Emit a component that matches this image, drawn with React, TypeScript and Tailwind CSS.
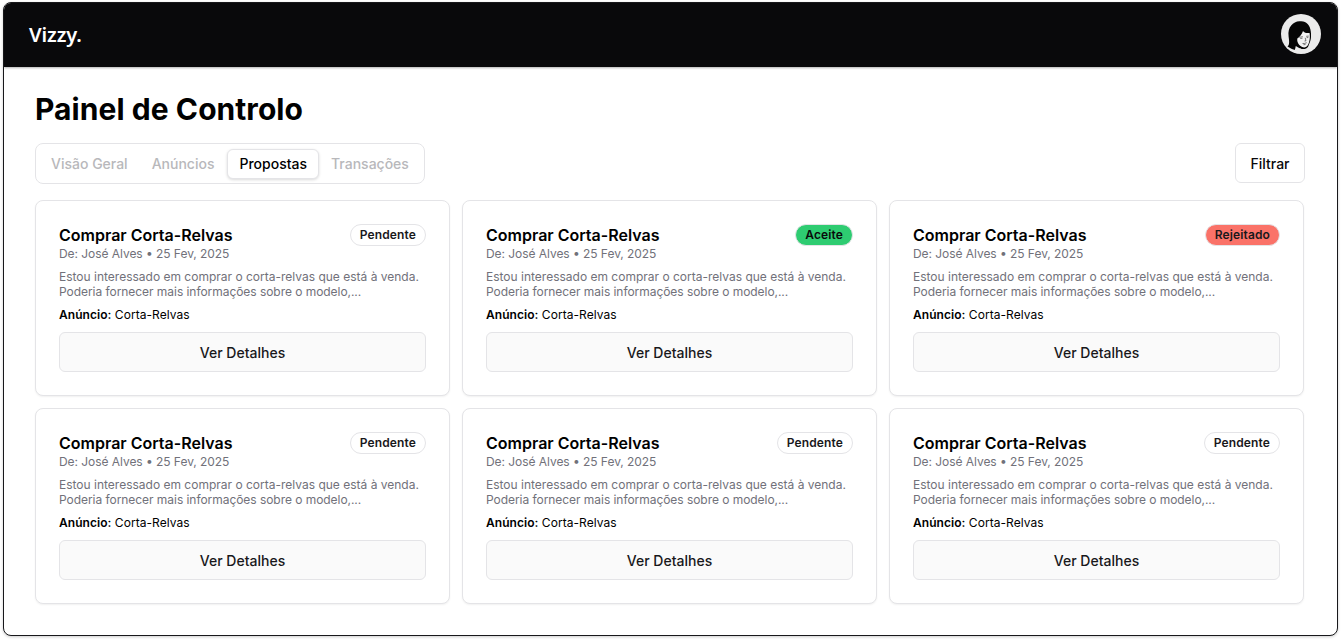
const tabs = ["Visão Geral", "Anúncios", "Propostas", "Transações"];

type Status = "Pendente" | "Aceite" | "Rejeitado";

const statuses: Status[] = ["Pendente", "Aceite", "Rejeitado", "Pendente", "Pendente", "Pendente"];

const badgeStyles: Record<Status, string> = {
  Pendente: "bg-white text-[#18181b]",
  Aceite: "bg-[#2ecc71] text-[#09090b]",
  Rejeitado: "bg-[#fa7268] text-[#18181b]",
};

function Avatar() {
  return (
    <svg viewBox="0 0 40 40" className="mb-0.5 size-10 shrink-0">
      <circle cx="20" cy="20" r="20" fill="#ebebeb" />
      <path
        d="M6.500 32.500C8.800 31 8.200 27 7.600 22.500C6.500 13 12 7.600 18.500 7.300C25 6.300 29.300 11 29.800 17.500C30.200 21 30.300 24 29.300 27L27.200 32.500C25.500 35.300 22 35.600 19.500 34.500L16 36.500C12 35.800 9.500 34.500 6.500 32.500Z"
        fill="#050505"
      />
      <path
        d="M16.300 24.500C18.500 23 20.800 20.500 22 17C23.500 19 26 19.300 28.600 19C29.200 23.500 28.800 29 26 32.300C24.300 34.200 20.800 33.500 18.300 31C16.700 29.300 15.900 27 16.300 24.500Z"
        fill="#f2f2f2"
      />
      <path
        d="M14.800 32L17.200 33.500L20 34.800L17.500 39L13.500 37.500Z"
        fill="#ebebeb"
      />
      <path
        d="M18.300 23.300L21.800 22.700M19.300 24.500L21.500 24.200M25.200 22.300L27.700 22.100M25.600 23.700L27.300 23.500M24.200 23.800L25 26.800L23.500 27M21.500 29.500Q23.500 29.800 25.700 28.700M22.500 30.700L24.500 30.500"
        stroke="#222"
        strokeWidth="0.600"
        fill="none"
      />
    </svg>
  );
}

function ProposalCard({ status }: { status: Status }) {
  return (
    <article className="flex h-[196px] flex-col rounded-lg border border-[#e4e4e7] bg-white p-[23px] shadow-[0_1px_2px_rgba(0,0,0,0.06)]">
      <div className="flex h-[22px] items-center justify-between">
        <h2 className="text-base font-semibold text-black">Comprar Corta-Relvas</h2>
        <span
          className={`flex h-[22px] items-center rounded-full border border-[#e4e4e7] px-[9px] text-xs font-semibold tracking-[0.01em] ${badgeStyles[status]}`}
        >
          {status}
        </span>
      </div>
      <p className="text-xs leading-[15px] tracking-[-0.004em] text-[#71717a] [font-feature-settings:'calt'_1]">
        De: José Alves • 25 Fev, 2025
      </p>
      <p className="mt-2 text-xs leading-[15px] text-[#71717a]">
        Estou interessado em comprar o corta-relvas que está à venda.
        <br />
        <span className="tracking-[-0.004em]">Poderia fornecer mais informações sobre o modelo,...</span>
      </p>
      <p className="mt-2 text-xs leading-[15px] tracking-[0.004em] text-black [font-feature-settings:'calt'_1]">
        <strong className="font-semibold">Anúncio:</strong> Corta-Relvas
      </p>
      <button className="mt-auto h-10 w-full rounded-md border border-[#e4e4e7] bg-[#fafafa] pt-px text-sm font-medium text-[#18181b]">
        Ver Detalhes
      </button>
    </article>
  );
}

export default function App() {
  return (
    <div className="h-[640px] bg-white pt-0.5 pr-[3px] pl-[3px] font-['Inter',sans-serif]">
      <div className="h-[634px] overflow-hidden rounded-lg border border-[#18181b] bg-white shadow-[0_1px_3px_rgba(0,0,0,0.2)]">
        <header className="flex h-16 items-center justify-between bg-[#09090b] pr-4 pl-[25px] shadow-[0_1px_2px_rgba(0,0,0,0.3)]">
          <span className="font-['Noto_Sans',sans-serif] text-xl font-semibold tracking-[-0.005em] text-white">Vizzy.</span>
          <Avatar />
        </header>
        <main className="pt-6 pr-8 pl-[31px]">
          <h1 className="text-[30px] leading-9 font-bold tracking-[0.002em] text-black">Painel de Controlo</h1>
          <div className="mt-4 flex items-start justify-between">
            <nav className="flex h-[41px] w-[390px] items-center rounded-lg border border-[#e4e4e7] pl-[3px]">
              {tabs.map((tab) => (
                <button
                  key={tab}
                  className={
                    tab === "Propostas"
                      ? "ml-px h-[30px] rounded-md border border-[#e4e4e7] bg-white px-[11px] text-sm font-medium text-black shadow-[0_1px_3px_rgba(0,0,0,0.15)]"
                      : "h-[30px] px-3 text-sm font-medium text-[#b8b8bb]"
                  }
                >
                  {tab}
                </button>
              ))}
            </nav>
            <button className="h-10 w-[70px] rounded-md border border-[#e4e4e7] bg-white pt-px text-sm font-medium text-[#09090b]">
              Filtrar
            </button>
          </div>
          <section className="mt-4 grid grid-cols-[repeat(3,415px)] gap-3">
            {statuses.map((status, index) => (
              <ProposalCard key={index} status={status} />
            ))}
          </section>
        </main>
      </div>
    </div>
  );
}
